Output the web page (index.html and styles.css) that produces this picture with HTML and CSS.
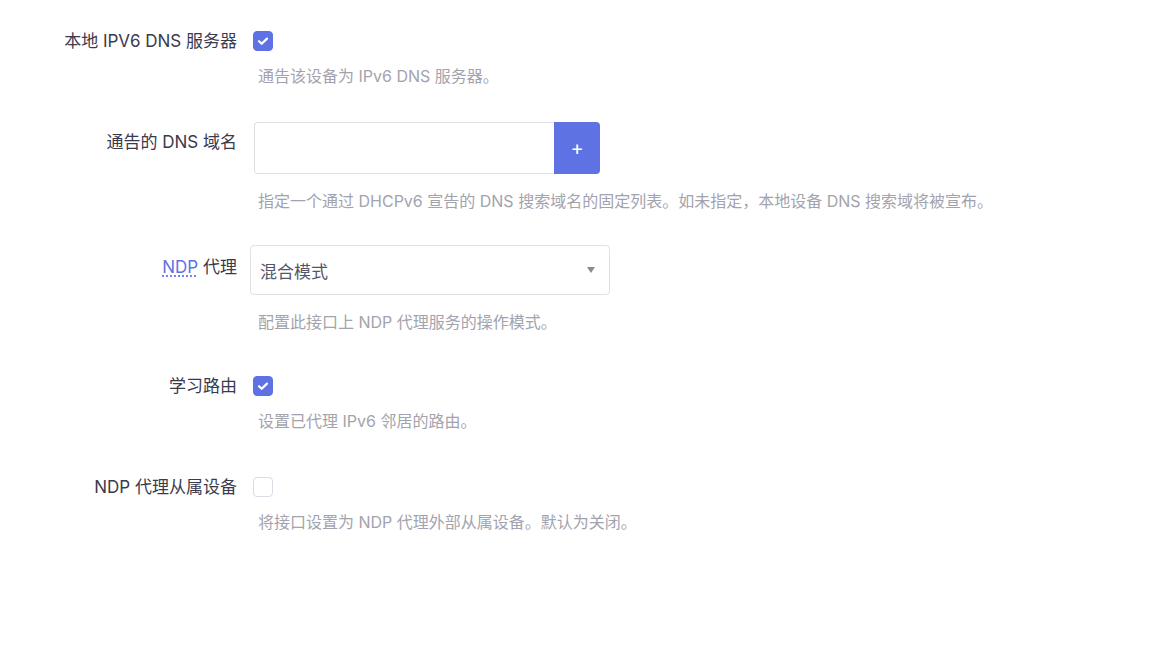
FILE: index.html
```html
<!DOCTYPE html>
<html lang="zh-CN">
<head>
<meta charset="utf-8">
<link rel="stylesheet" href="styles.css">
</head>
<body>
<div class="form">
  <div class="row">
    <div class="label">本地 IPV6 DNS 服务器</div>
    <div class="field">
      <div class="control"><span class="cb checked"><svg viewBox="0 0 20 20" width="20" height="20"><path d="M6 10.2l2.7 2.6L14 7.6" fill="none" stroke="#fff" stroke-width="2.2" stroke-linecap="round" stroke-linejoin="round"/></svg></span></div>
      <div class="desc">通告该设备为 IPv6 DNS 服务器。</div>
    </div>
  </div>
  <div class="row">
    <div class="label">通告的 DNS 域名</div>
    <div class="field">
      <div class="control tall">
        <div class="dyn">
          <input class="text" type="text">
          <button class="add">+</button>
        </div>
      </div>
      <div class="desc wide">指定一个通过 DHCPv6 宣告的 DNS 搜索域名的固定列表。如未指定，本地设备 DNS 搜索域将被宣布。</div>
    </div>
  </div>
  <div class="row">
    <div class="label sel"><abbr class="abbr">NDP</abbr> 代理</div>
    <div class="field">
      <div class="control tall">
        <div class="select"><span>混合模式</span><span class="arrow"></span></div>
      </div>
      <div class="desc wide">配置此接口上 NDP 代理服务的操作模式。</div>
    </div>
  </div>
  <div class="row">
    <div class="label">学习路由</div>
    <div class="field">
      <div class="control"><span class="cb checked"><svg viewBox="0 0 20 20" width="20" height="20"><path d="M6 10.2l2.7 2.6L14 7.6" fill="none" stroke="#fff" stroke-width="2.2" stroke-linecap="round" stroke-linejoin="round"/></svg></span></div>
      <div class="desc">设置已代理 IPv6 邻居的路由。</div>
    </div>
  </div>
  <div class="row">
    <div class="label">NDP 代理从属设备</div>
    <div class="field">
      <div class="control"><span class="cb"></span></div>
      <div class="desc">将接口设置为 NDP 代理外部从属设备。默认为关闭。</div>
    </div>
  </div>
</div>
</body>
</html>
```
FILE: styles.css
```css
html, body {
  margin: 0;
  padding: 0;
  background: #fff;
}
body {
  font-family: Inter, "Noto Sans CJK SC", sans-serif;
  color: #32325d;
}
.form {
  padding-top: 21px;
  display: flex;
  flex-direction: column;
  gap: 36px;
}
.row {
  display: grid;
  grid-template-columns: 237px 1fr;
  column-gap: 16px;
}
.label {
  text-align: right;
  font-size: 17px;
  line-height: 40px;
  color: #3a3a4e;
  white-space: nowrap;
}
.label.sel {
  padding-top: 2px;
}
.abbr {
  color: #5e72e4;
  text-decoration: underline dotted #5e72e4;
  text-underline-offset: 3px;
}
.field {
  display: flex;
  flex-direction: column;
}
.control {
  height: 40px;
  display: flex;
  align-items: center;
}
.control.tall {
  height: auto;
}
.cb {
  width: 20px;
  height: 20px;
  box-sizing: border-box;
  border-radius: 4px;
  border: 1px solid #dcdce4;
  background: #fff;
  display: inline-flex;
}
.cb.checked {
  background: #5e72e4;
  border-color: #5e72e4;
}
.cb svg {
  margin: -1px;
}
.desc {
  margin-top: 5px;
  padding-left: 5px;
  font-size: 16px;
  line-height: 20px;
  color: #a3a3ad;
  white-space: nowrap;
}
.desc.wide {
  margin-top: 17px;
  margin-bottom: -2px;
}
.dyn {
  display: flex;
  height: 52px;
  margin-left: 1px;
}
.text {
  width: 300px;
  box-sizing: border-box;
  border: 1px solid #dfe0e6;
  border-right: none;
  border-radius: 4px 0 0 4px;
  margin: 0;
  padding: 0 10px;
  font-size: 16px;
  outline: none;
}
.add {
  width: 46px;
  border: none;
  margin: 0;
  border-radius: 0 4px 4px 0;
  background: #5e72e4;
  color: #fff;
  font-family: Inter, sans-serif;
  font-size: 20px;
  line-height: 1;
  padding: 0;
}
.select {
  margin-left: -3px;
  width: 360px;
  height: 50px;
  box-sizing: border-box;
  border: 1px solid #dfe0e6;
  border-radius: 4px;
  display: flex;
  align-items: center;
  justify-content: space-between;
  padding: 0 14px 0 9px;
  font-size: 17px;
  color: #55556a;
}
.arrow {
  width: 0;
  height: 0;
  border-left: 4px solid transparent;
  border-right: 4px solid transparent;
  border-top: 6px solid #8a8a96;
}
```
